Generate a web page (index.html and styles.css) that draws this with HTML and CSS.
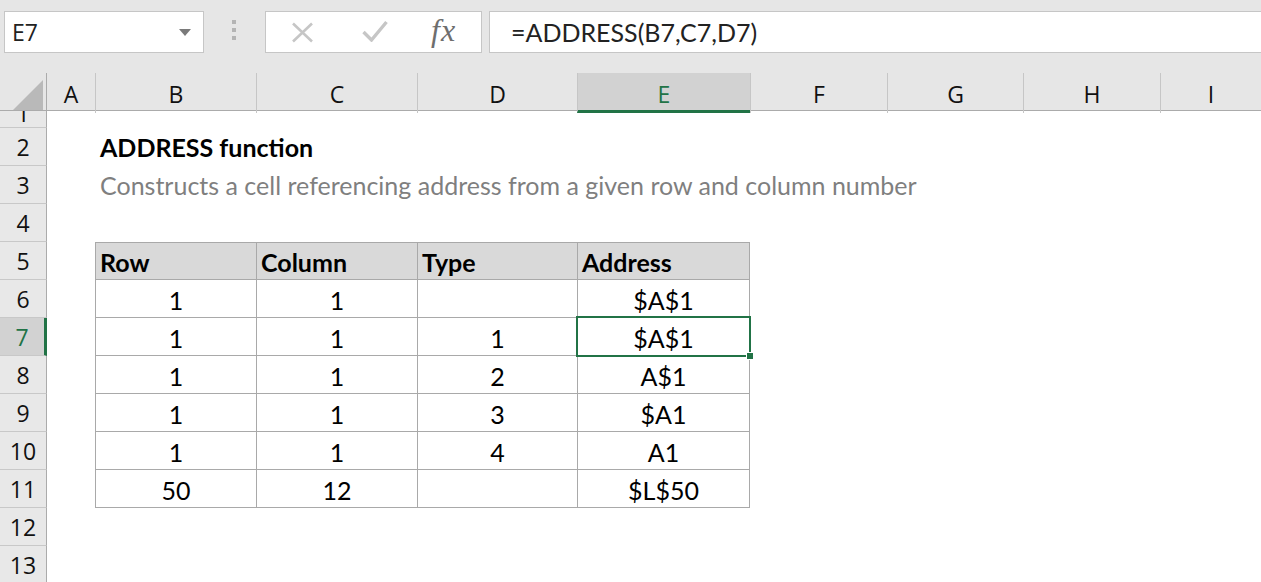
FILE: index.html
```html
<!DOCTYPE html>
<html lang="en">
<head>
    <meta charset="UTF-8">
    <title>ADDRESS function</title>
    <link rel="stylesheet" href="styles.css">
</head>
<body>
    <!-- Formula bar -->
    <div class="toolbar">
        <div class="namebox">
            <span>E7</span>
            <svg class="caret" width="12" height="7" viewBox="0 0 12 7"><path d="M0 0h12L6 7z" fill="#7a7a7a"/></svg>
        </div>
        <div class="grip"><i></i><i></i><i></i></div>
        <div class="fbuttons">
            <svg class="btn-x" width="23" height="21" viewBox="0 0 23 21"><path d="M2 1.5l19 18M21 1.5l-19 18" stroke="#c6c6c6" stroke-width="2.6" fill="none"/></svg>
            <svg class="btn-ok" width="26" height="22" viewBox="0 0 26 22"><path d="M1.5 12l8 8L24.5 2" stroke="#c6c6c6" stroke-width="3.4" fill="none"/></svg>
            <span class="fx">fx</span>
        </div>
        <div class="formula">=ADDRESS(B7,C7,D7)</div>
    </div>

    <!-- Worksheet -->
    <div class="sheet">
        <div class="row colhdr">
            <div class="corner"><svg width="30" height="30" viewBox="0 0 30 30"><path d="M0 30L30 0v30z" fill="#b9b9b9"/></svg></div>
            <div class="ch first">A</div>
            <div class="ch">B</div>
            <div class="ch">C</div>
            <div class="ch">D</div>
            <div class="ch active">E</div>
            <div class="ch">F</div>
            <div class="ch">G</div>
            <div class="ch">H</div>
            <div class="ch">I</div>
        </div>

        <div class="row partial">
            <div class="rh"><span>1</span></div>
        </div>

        <div class="row">
            <div class="rh">2</div>
            <div></div>
            <div class="wide title">ADDRESS function</div>
        </div>

        <div class="row">
            <div class="rh">3</div>
            <div></div>
            <div class="wide subtitle">Constructs a cell referencing address from a given row and column number</div>
        </div>

        <div class="row">
            <div class="rh">4</div>
        </div>

        <div class="row">
            <div class="rh">5</div>
            <div></div>
            <div class="cell th top">Row</div>
            <div class="cell th top">Column</div>
            <div class="cell th top">Type</div>
            <div class="cell th top last">Address</div>
        </div>

        <div class="row">
            <div class="rh">6</div>
            <div></div>
            <div class="cell num">1</div>
            <div class="cell num">1</div>
            <div class="cell num"></div>
            <div class="cell num last">$A$1</div>
        </div>

        <div class="row">
            <div class="rh active">7</div>
            <div></div>
            <div class="cell num">1</div>
            <div class="cell num">1</div>
            <div class="cell num">1</div>
            <div class="cell num last sel">$A$1</div>
        </div>

        <div class="row">
            <div class="rh">8</div>
            <div></div>
            <div class="cell num">1</div>
            <div class="cell num">1</div>
            <div class="cell num">2</div>
            <div class="cell num last">A$1</div>
        </div>

        <div class="row">
            <div class="rh">9</div>
            <div></div>
            <div class="cell num">1</div>
            <div class="cell num">1</div>
            <div class="cell num">3</div>
            <div class="cell num last">$A1</div>
        </div>

        <div class="row">
            <div class="rh">10</div>
            <div></div>
            <div class="cell num">1</div>
            <div class="cell num">1</div>
            <div class="cell num">4</div>
            <div class="cell num last">A1</div>
        </div>

        <div class="row">
            <div class="rh">11</div>
            <div></div>
            <div class="cell num">50</div>
            <div class="cell num">12</div>
            <div class="cell num"></div>
            <div class="cell num last">$L$50</div>
        </div>

        <div class="row">
            <div class="rh">12</div>
        </div>

        <div class="row">
            <div class="rh">13</div>
        </div>
    </div>
</body>
</html>
```

FILE: styles.css
```css
/* General */
body {
    margin: 0;
    background-color: #fff;
    font-family: "Open Sans", sans-serif;
    color: #000;
    overflow: hidden;
}

/* Formula bar */
.toolbar {
    height: 73px;
    background-color: #e6e6e6;
    display: flex;
    align-items: flex-start;
    padding: 11px 0 0 4px;
    box-sizing: border-box;
}

.namebox,
.fbuttons,
.formula {
    height: 42px;
    background-color: #fff;
    border: 1px solid #c6c6c6;
    box-sizing: border-box;
    display: flex;
    align-items: center;
}

.namebox {
    width: 200px;
    padding: 0 12px 0 7px;
    justify-content: space-between;
    font-size: 23px;
    color: #222;
}

.grip {
    width: 4px;
    margin: 9px 29px 0 28px;
    display: flex;
    flex-direction: column;
    gap: 4px;
}

.grip i {
    display: block;
    width: 4px;
    height: 4px;
    background-color: #b4b4b4;
}

.fbuttons {
    width: 217px;
    padding-left: 25px;
}

.btn-x { margin-right: 48px; }
.btn-ok { margin-right: 43px; margin-top: -2px; }

.fx {
    font-family: "Liberation Serif", serif;
    font-style: italic;
    font-size: 32px;
    color: #6e6e6e;
    letter-spacing: 1px;
    margin-top: -4px;
}

.formula {
    flex: 1;
    margin-left: 7px;
    border-right: none;
    padding-left: 21px;
    font-family: Lato, sans-serif;
    font-size: 25px;
    color: #222;
}

/* Sheet grid */
.row {
    display: grid;
    grid-template-columns: 47px 48px 161px 161px 160px 173px 137px 136px 137px 1fr;
    height: 38px;
}

.row.partial { height: 17px; }

/* Column headers */
.colhdr {
    background-color: #e6e6e6;
    border-bottom: 1px solid #ababab;
    box-sizing: border-box;
}

.corner {
    border-right: 1px solid #ababab;
    display: flex;
    align-items: flex-end;
    justify-content: flex-end;
    padding: 0 3px 3px 0;
}

.ch {
    border-left: 1px solid #c6c6c6;
    display: flex;
    align-items: center;
    justify-content: center;
    font-size: 23px;
    color: #111;
    padding-top: 2px;
}

.ch.first { border-left: none; }

.ch.active {
    background-color: #d2d2d2;
    color: #217346;
    border-bottom: 3px solid #217346;
    padding-top: 5px;
}

/* Row headers */
.rh {
    background-color: #e8e8e8;
    border-right: 1px solid #ababab;
    border-bottom: 1px solid #c8c8c8;
    box-sizing: border-box;
    display: flex;
    align-items: center;
    justify-content: center;
    font-size: 23px;
    color: #111;
}

.partial .rh {
    overflow: hidden;
    align-items: flex-end;
    line-height: 1;
}

.partial .rh span { margin-bottom: 2px; }

.rh.active {
    background-color: #d2d2d2;
    color: #217346;
    border-right: 3px solid #217346;
}

/* Cells */
.wide {
    grid-column: 3 / -1;
    display: flex;
    align-items: center;
    padding-left: 5px;
    font-family: Lato, sans-serif;
    font-size: 25px;
    white-space: nowrap;
}

.title { font-weight: 700; }
.subtitle { color: #7f7f7f; }

.cell {
    border-left: 1px solid #a9a9a9;
    border-bottom: 1px solid #a9a9a9;
    box-sizing: border-box;
    display: flex;
    align-items: center;
    font-family: Lato, sans-serif;
    font-size: 25px;
    padding-top: 2px;
}

.cell.top { border-top: 1px solid #a9a9a9; }
.cell.last { border-right: 1px solid #a9a9a9; }

.th {
    background-color: #d9d9d9;
    font-weight: 700;
    padding-left: 4px;
}

.num { justify-content: center; }

/* Active cell */
.sel { position: relative; }

.sel::after {
    content: "";
    position: absolute;
    left: -2px;
    top: -2px;
    right: -2px;
    bottom: -2px;
    border: 2px solid #217346;
}

.sel::before {
    content: "";
    position: absolute;
    right: -5px;
    bottom: -5px;
    width: 6px;
    height: 6px;
    background-color: #217346;
    border: 1px solid #fff;
    z-index: 1;
}
```
